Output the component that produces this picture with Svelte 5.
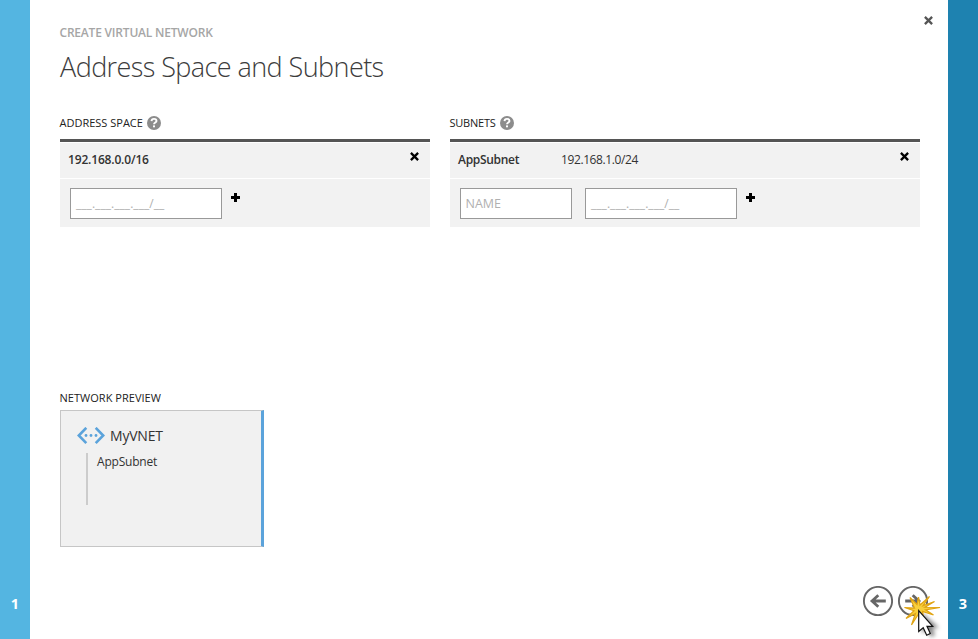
<script>
  const spaces = ['192.168.0.0/16'];
  const subnets = [{ name: 'AppSubnet', range: '192.168.1.0/24' }];
  const mask = '___.___.___.___/__';
</script>

{#snippet help()}
  <svg class="help" width="14" height="14" viewBox="0 0 14 14">
    <circle cx="7" cy="7" r="7" fill="#8c8c8c" />
    <path d="M4.500 5.100C4.600 3.700 5.600 2.900 7 2.900c1.500 0 2.500.8 2.500 2C9.500 6.500 7 6.500 7 8.300" fill="none" stroke="#fff" stroke-width="1.900" />
    <rect x="6" y="9.400" width="2" height="1.900" fill="#fff" />
  </svg>
{/snippet}

{#snippet cross(color)}
  <svg width="9" height="9" viewBox="0 0 9 9">
    <path d="M.9.9 8.100 8.100M8.100.9.9 8.100" stroke={color} stroke-width="2.300" />
  </svg>
{/snippet}

{#snippet plus()}
  <svg class="plus" width="9" height="9" viewBox="0 0 9 9">
    <path d="M3 0h3v3h3v3H6v3H3V6H0V3h3z" fill="#000" />
  </svg>
{/snippet}

<div class="wizard">
  <aside class="step previous"><span>1</span></aside>
  <main>
    <button class="close" aria-label="Close">{@render cross('#555')}</button>
    <div class="eyebrow"><span>CREATE VIRTUAL NETWORK</span></div>
    <h1>Address Space and Subnets</h1>

    <div class="columns">
      <section class="spaces">
        <h2><span class="l-space">ADDRESS SPACE</span>{@render help()}</h2>
        <div class="table">
          {#each spaces as space}
            <div class="row"><b class="ip">{space}</b><button class="remove" aria-label="Remove">{@render cross('#000')}</button></div>
          {/each}
          <div class="row entry">
            <div class="field wide"><span class="mask">{mask}</span></div>
            {@render plus()}
          </div>
        </div>
      </section>
      <section class="subnets">
        <h2><span class="l-subnets">SUBNETS</span>{@render help()}</h2>
        <div class="table">
          {#each subnets as subnet}
            <div class="row"><b class="name">{subnet.name}</b><span class="range">{subnet.range}</span><button class="remove" aria-label="Remove">{@render cross('#000')}</button></div>
          {/each}
          <div class="row entry">
            <div class="field short"><span class="ph">NAME</span></div>
            <div class="field wide"><span class="mask">{mask}</span></div>
            {@render plus()}
          </div>
        </div>
      </section>
    </div>

    <section class="preview">
      <h2><span class="l-preview">NETWORK PREVIEW</span></h2>
      <div class="card">
        <div class="vnet">
          <svg width="28" height="18" viewBox="0 0 28 18">
            <path d="M9.300.8 1.800 8.500l7.500 7.700M18.700.8 26.200 8.500l-7.500 7.700" fill="none" stroke="#5ba3db" stroke-width="2.600" />
            <g fill="#5ba3db"><circle cx="9" cy="8.500" r="1.400" /><circle cx="14" cy="8.500" r="1.400" /><circle cx="19" cy="8.500" r="1.400" /></g>
          </svg>
          <span>MyVNET</span>
        </div>
        <div class="children">
          {#each subnets as subnet}<span>{subnet.name}</span>{/each}
        </div>
      </div>
    </section>

    <nav>
      <button aria-label="Back">
        <svg width="31" height="31" viewBox="0 0 31 31" fill="none" stroke="#666">
          <circle cx="16" cy="15" r="14.100" stroke-width="1.900" />
          <path d="M23.800 15H9.500M16.300 9.200 10 15 16.300 20.800" stroke-width="2.800" />
        </svg>
      </button>
      <button aria-label="Next">
        <svg width="31" height="31" viewBox="0 0 31 31" fill="none" stroke="#666">
          <circle cx="16" cy="15" r="14.100" stroke-width="1.900" />
          <path d="M8.200 15H22.500M15.700 9.200 22 15 15.700 20.800" stroke-width="2.800" />
        </svg>
      </button>
    </nav>
  </main>
  <aside class="step next"><span>3</span></aside>

  <svg class="pointer" width="48" height="54" viewBox="900 585 48 54">
    <defs><filter id="soft" x="-50%" y="-50%" width="200%" height="200%"><feGaussianBlur stdDeviation="2" /></filter></defs>
    <path d="M922 613V633L927 630 931 637 935 635 932 628H939Z" fill="#000" opacity=".5" filter="url(#soft)" />
    <path d="M918.500 597 920 605 929.500 596.500 923 605.800 934.500 601.500 925 607.300 940 607.500 925.500 609.800 933.500 615 922.500 611.500 924 619 919.500 612.500 911.500 625 915.500 613.500 906 618.500 914 610.800 904.500 607.500 914.500 608 910 597.500 917 604.500Z" fill="#f8cf3c" stroke="#e0a414" stroke-width="1.200" />
    <path d="M918.700 610.500V631.500L923.200 627.800 926.700 635.300 930.300 633.500 927 626.300H932.700Z" fill="#fff" stroke="#111" stroke-width="1.200" />
  </svg>
</div>

<style>
  :global(body) { margin: 0; background: #fff; }
  .wizard { position: relative; display: flex; width: 978px; height: 639px; overflow: hidden; font-family: "Open Sans", "Noto Sans", sans-serif; color: #333; font-size: 12px; background: #fff; }
  .step { width: 30px; box-sizing: border-box; padding-top: 594px; line-height: 20px; text-align: center; color: #fff; font-weight: 700; font-size: 14.500px; }
  .previous { background: #54b5e1; }
  .next { background: #1e82b0; }
  main { position: relative; width: 918px; box-sizing: border-box; padding: 24px 28px 0 30px; }
  button { display: block; padding: 0; border: 0; background: none; line-height: 0; }
  svg { display: block; flex: none; }
  .close { position: absolute; left: 894px; top: 16px; }
  .eyebrow { height: 18px; line-height: 18px; font-size: 12px; font-weight: 600; color: #a6a6a6; letter-spacing: -0.200px; margin-left: -0.500px; white-space: nowrap; }
  h1 { margin: 6px 0 0; height: 38px; line-height: 38px; font-size: 27px; font-weight: 300; color: #3c3c3c; letter-spacing: -0.580px; white-space: nowrap; }
  .columns { display: flex; gap: 20px; margin-top: 28px; }
  .spaces { width: 370px; }
  .subnets { width: 470px; }
  h2 { display: flex; margin: 0; height: 18px; line-height: 18px; font-size: 11px; font-weight: 400; color: #222; white-space: nowrap; }
  h2 span { margin-left: -0.500px; }
  .help { margin: 2px 0 0 4px; }
  .l-space { letter-spacing: 0; }
  .l-subnets { letter-spacing: -0.220px; }
  .l-preview { letter-spacing: 0.030px; }
  .table { margin-top: 7px; border-top: 3px solid #555; padding-top: 1px; }
  .row { display: flex; height: 35px; margin-bottom: 1px; background: #f2f2f2; line-height: 34px; padding: 0 11px 0 8px; white-space: nowrap; }
  .row b { font-weight: 600; letter-spacing: -0.300px; }
  .row .ip { letter-spacing: -0.170px; }
  .name { width: 103px; }
  .range { letter-spacing: -0.400px; }
  .remove { margin: 9px 0 0 auto; height: 9px; }
  .entry { height: 48px; margin: 0; padding: 9px 0 0 10px; box-sizing: border-box; }
  .field { height: 31px; box-sizing: border-box; border: 1px solid #999; background: #fff; line-height: 30px; padding-left: 5px; color: #b0b0b0; }
  .wide { width: 152px; }
  .short { width: 112px; margin-right: 13px; }
  .ph { font-size: 12.500px; margin-left: -0.500px; }
  .mask { letter-spacing: 0.050px; }
  .plus { margin: 5px 0 0 9px; }
  .preview { margin-top: 162px; }
  .card { margin-top: 3px; width: 204px; height: 137px; box-sizing: border-box; border: 1px solid #c6c6c6; border-right: 3px solid #5ba3db; background: #f1f1f1; padding: 16px 0 0 16px; }
  .vnet { display: flex; gap: 5px; height: 18px; line-height: 18px; font-size: 14px; }
  .vnet span { letter-spacing: -0.200px; }
  .children { margin: 8px 0 0 9px; border-left: 2px solid #ccc; height: 52px; padding-left: 9px; line-height: 18px; box-sizing: border-box; letter-spacing: -0.200px; }
  nav { display: flex; gap: 4px; margin: 39px 0 0 802px; }
  .pointer { position: absolute; left: 900px; top: 585px; }
</style>
